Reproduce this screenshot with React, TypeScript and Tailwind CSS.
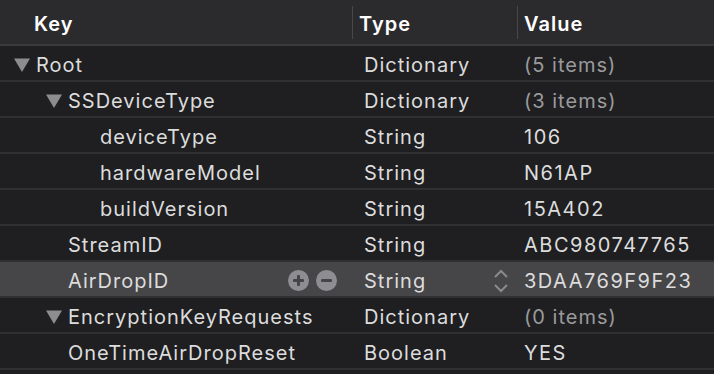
import React from "react";

type Row = {
  key: string;
  type: string;
  value: string;
  level: number;
  expandable?: boolean;
  muted?: boolean;
  selected?: boolean;
};

const rows: Row[] = [
  { key: "Root", type: "Dictionary", value: "(5 items)", level: 0, expandable: true, muted: true },
  { key: "SSDeviceType", type: "Dictionary", value: "(3 items)", level: 1, expandable: true, muted: true },
  { key: "deviceType", type: "String", value: "106", level: 2 },
  { key: "hardwareModel", type: "String", value: "N61AP", level: 2 },
  { key: "buildVersion", type: "String", value: "15A402", level: 2 },
  { key: "StreamID", type: "String", value: "ABC980747765", level: 1 },
  { key: "AirDropID", type: "String", value: "3DAA769F9F23", level: 1, selected: true },
  { key: "EncryptionKeyRequests", type: "Dictionary", value: "(0 items)", level: 1, expandable: true, muted: true },
  { key: "OneTimeAirDropReset", type: "Boolean", value: "YES", level: 1 },
];

const indent = ["pl-[13px]", "pl-[45px]", "pl-[77px]"];

function Triangle() {
  return (
    <svg width="18" height="16" viewBox="0 0 18 16" className="shrink-0">
      <path d="M1 1.5 L17 1.5 L9 15 Z" fill="#8d8d90" />
    </svg>
  );
}

function PlusMinus() {
  return (
    <div className="flex items-center gap-[7px] mr-[15px]">
      <svg width="21" height="21" viewBox="0 0 21 21">
        <circle cx="10.5" cy="10.5" r="10.5" fill="#8e8e92" />
        <rect x="5" y="9" width="11" height="3" rx="1" fill="#454547" />
        <rect x="9" y="5" width="3" height="11" rx="1" fill="#454547" />
      </svg>
      <svg width="21" height="21" viewBox="0 0 21 21">
        <circle cx="10.5" cy="10.5" r="10.5" fill="#8e8e92" />
        <rect x="5" y="9" width="11" height="3" rx="1" fill="#454547" />
      </svg>
    </div>
  );
}

function Stepper() {
  return (
    <svg width="16" height="24" viewBox="0 0 16 24" className="mr-[8px]">
      <path d="M2 8 L8 2 L14 8" fill="none" stroke="#8a8a8d" strokeWidth="2" />
      <path d="M2 16 L8 22 L14 16" fill="none" stroke="#8a8a8d" strokeWidth="2" />
    </svg>
  );
}

export default function App() {
  return (
    <div
      className="w-[714px] h-[374px] overflow-hidden bg-[#1f1f21] text-[20px] tracking-[1px] text-[#dcdcdd]"
      style={{ fontFamily: "Inter, 'Liberation Sans', sans-serif" }}
    >
      <div className="grid grid-cols-[352px_165px_1fr] h-[46px] bg-[#2b2b2e] font-semibold text-white border-b-2 border-[#3a3a3c]">
        <div className="flex items-center pl-[34px] pt-[3px]">Key</div>
        <div className="flex items-center pl-[6px] pt-[3px] border-l border-[#48484b] my-[6px]">Type</div>
        <div className="flex items-center pl-[6px] pt-[3px] border-l border-[#48484b] my-[6px]">Value</div>
      </div>
      {rows.map((r) => (
        <div
          key={r.key}
          className={`grid grid-cols-[352px_165px_1fr] h-[36px] border-b-2 border-[#303032] ${
            r.selected ? "bg-[#464648]" : "bg-[#1f1f21]"
          }`}
        >
          <div className={`flex items-center pt-[3px] ${indent[r.level]}`}>
            {r.expandable ? (
              <span className="flex items-center gap-[5px]">
                <Triangle />
                {r.key}
              </span>
            ) : (
              <span className={r.level === 0 ? "" : "pl-[23px]"}>{r.key}</span>
            )}
            {r.selected && (
              <span className="ml-auto">
                <PlusMinus />
              </span>
            )}
          </div>
          <div className="flex items-center pl-[12px] pt-[3px]">
            <span>{r.type}</span>
            {r.selected && (
              <span className="ml-auto">
                <Stepper />
              </span>
            )}
          </div>
          <div
            className={`flex items-center pl-[7px] pt-[3px] ${
              r.muted ? "text-[#9a9a9c]" : "tracking-[1.5px]"
            }`}
          >
            {r.value}
          </div>
        </div>
      ))}
    </div>
  );
}
